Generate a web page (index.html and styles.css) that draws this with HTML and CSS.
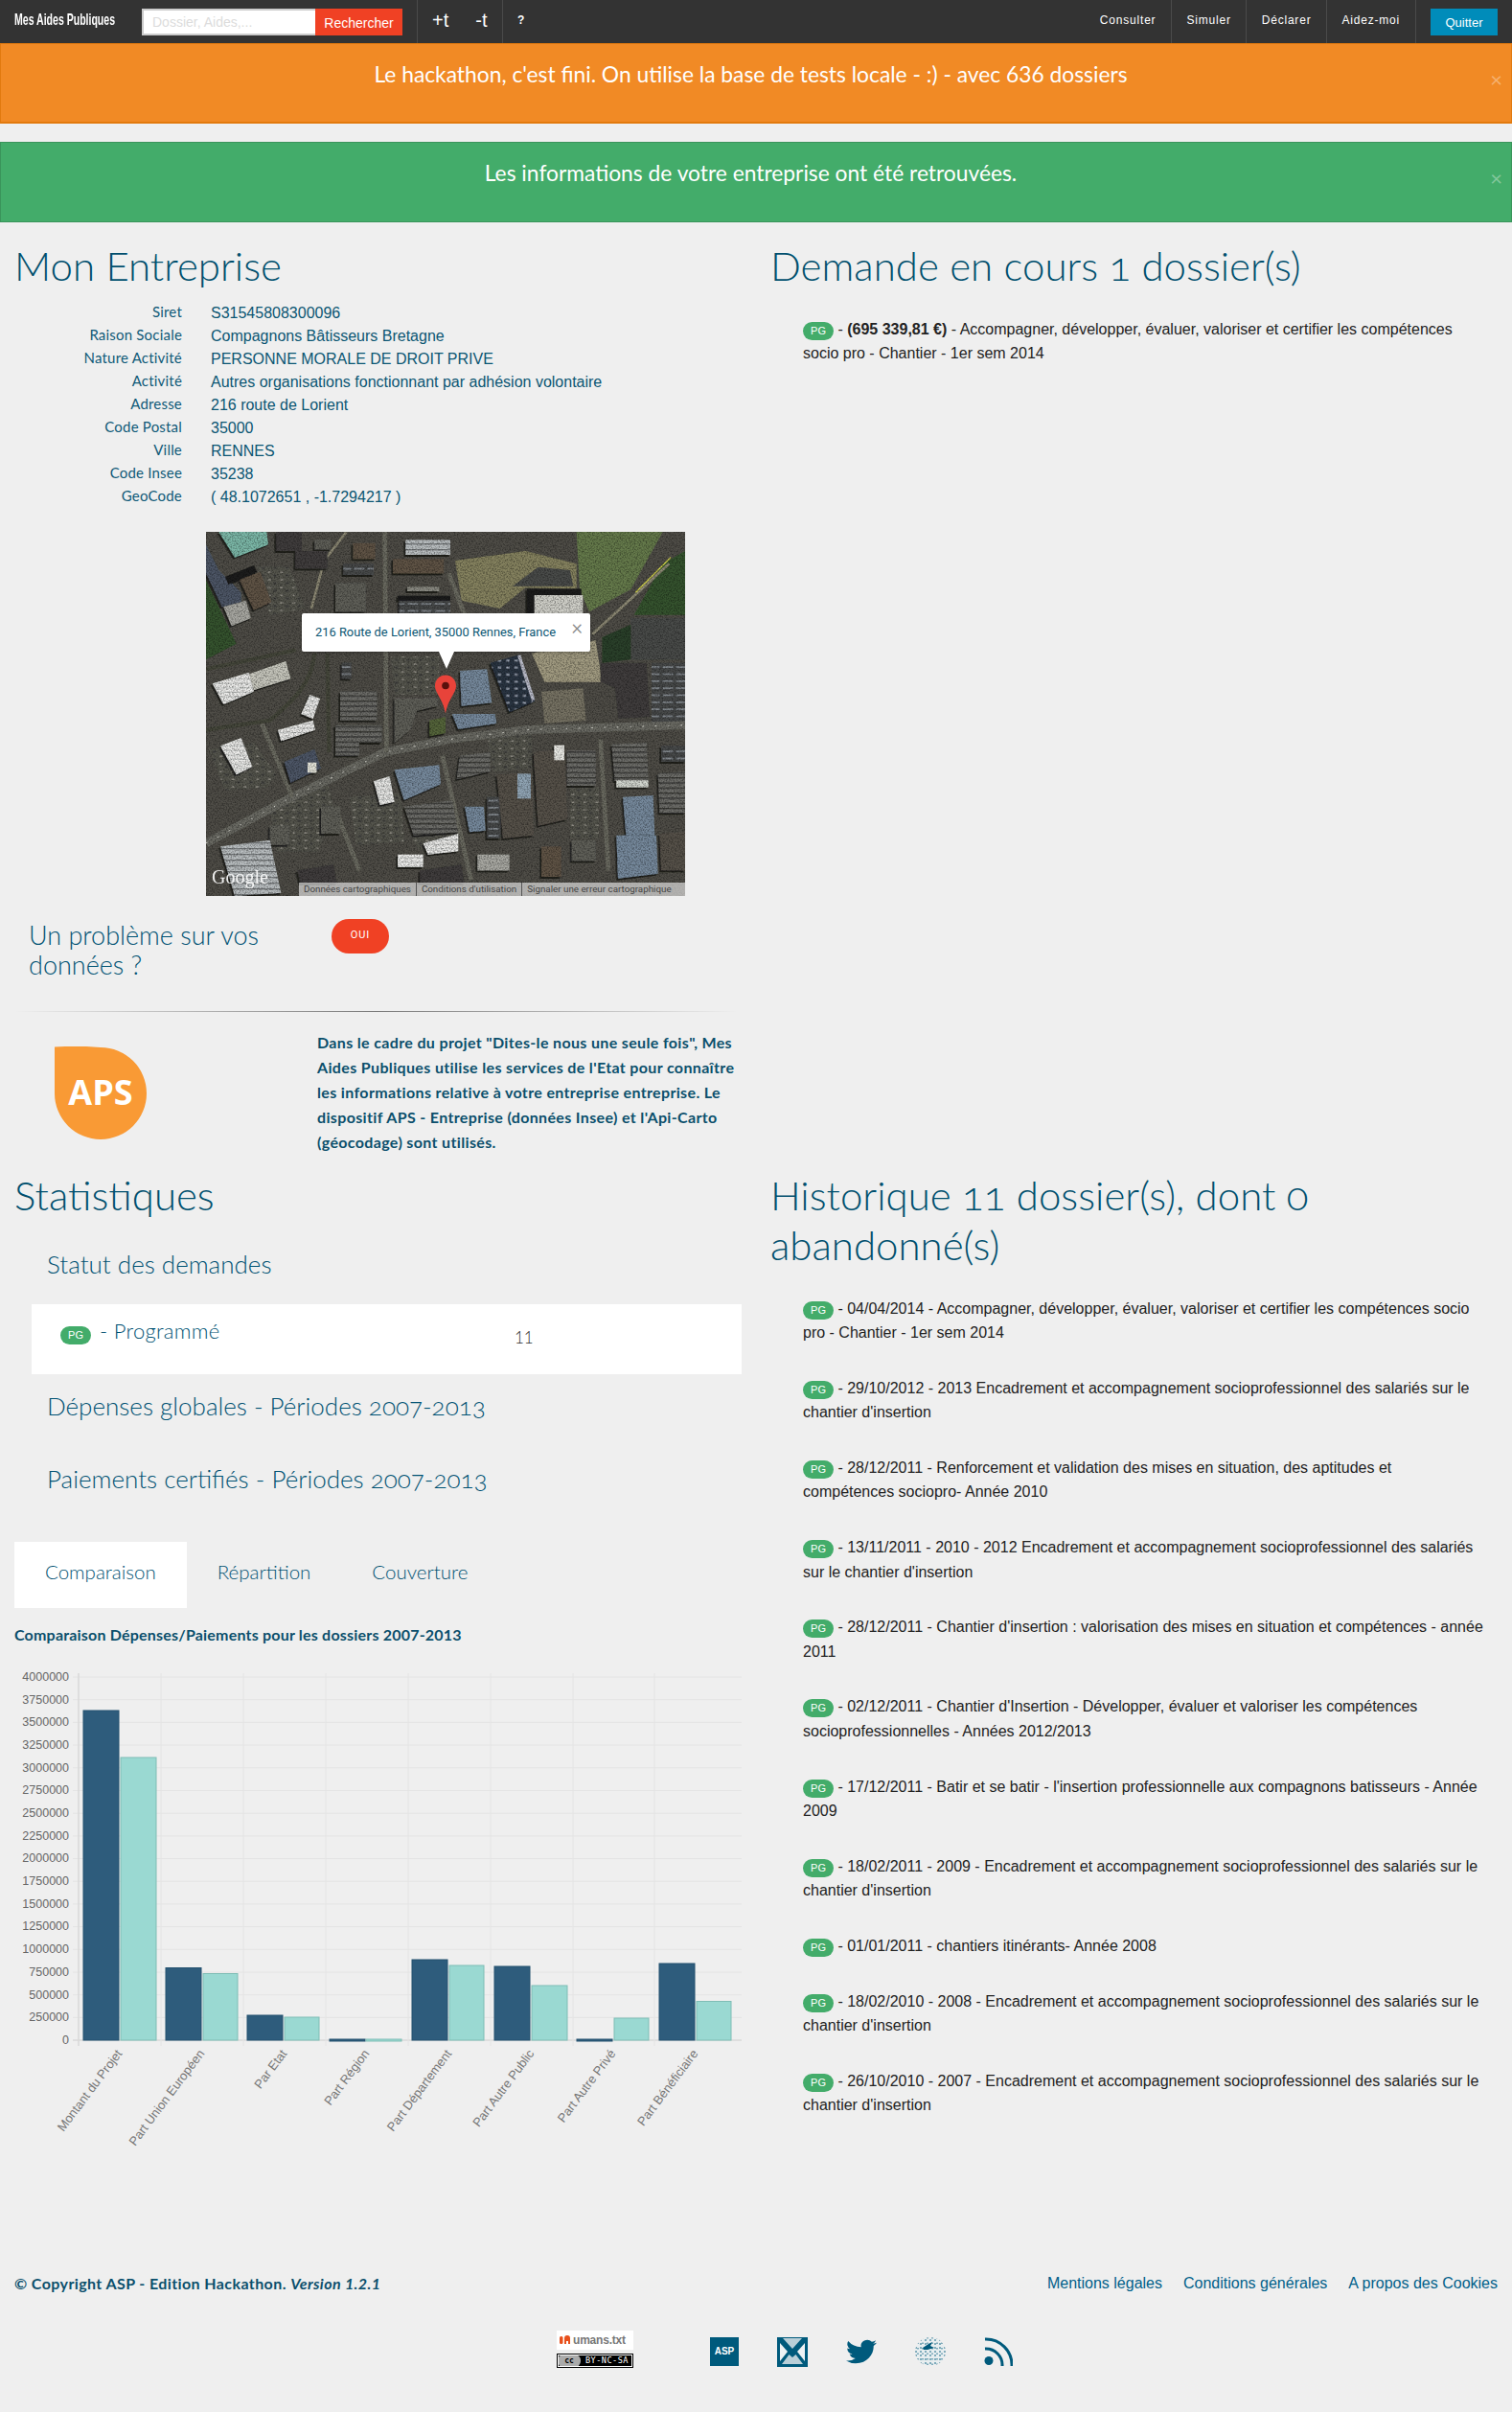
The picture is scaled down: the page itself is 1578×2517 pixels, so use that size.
FILE: index.html
```html
<!DOCTYPE html>
<html lang="fr">
<head>
<meta charset="utf-8">
<title>Mes Aides Publiques</title>
<link rel="stylesheet" href="styles.css">
</head>
<body>
<nav class="topbar">
  <a class="brand"><span class="brand-text">Mes Aides Publiques</span></a>
  <form class="search">
    <input class="search-input" type="text" placeholder="Dossier, Aides,...">
    <span class="search-btn">Rechercher</span>
  </form>
  <div class="tools">
    <a class="tool">+t</a>
    <a class="tool tool-minus">-t</a>
  </div>
  <a class="help">?</a>
  <ul class="menu">
    <li>Consulter</li>
    <li>Simuler</li>
    <li>Déclarer</li>
    <li>Aidez-moi</li>
  </ul>
  <a class="quit">Quitter</a>
</nav>

<div class="alert alert-orange">Le hackathon, c'est fini. On utilise la base de tests locale - :) - avec 636 dossiers<span class="close">×</span></div>
<div class="alert alert-green">Les informations de votre entreprise ont été retrouvées.<span class="close">×</span></div>

<main class="grid">
  <section class="col">
    <h1 class="title">Mon Entreprise</h1>
    <dl class="facts">
      <dt>Siret</dt><dd>S31545808300096</dd>
      <dt>Raison Sociale</dt><dd>Compagnons Bâtisseurs Bretagne</dd>
      <dt>Nature Activité</dt><dd>PERSONNE MORALE DE DROIT PRIVE</dd>
      <dt>Activité</dt><dd>Autres organisations fonctionnant par adhésion volontaire</dd>
      <dt>Adresse</dt><dd>216 route de Lorient</dd>
      <dt>Code Postal</dt><dd>35000</dd>
      <dt>Ville</dt><dd>RENNES</dd>
      <dt>Code Insee</dt><dd>35238</dd>
      <dt>GeoCode</dt><dd>( 48.1072651 , -1.7294217 )</dd>
    </dl>

    <div class="map">
      <svg class="map-img" viewBox="0 0 1500 1140" preserveAspectRatio="none">
        <defs>
          <filter id="grain" x="0" y="0" width="100%" height="100%">
            <feTurbulence type="fractalNoise" baseFrequency="0.22" numOctaves="3" seed="7"/>
            <feColorMatrix values="0 0 0 0 0  0 0 0 0 0  0 0 0 0 0  2.400 0 0 0 -0.950"/>
          </filter>
          <filter id="soft"><feGaussianBlur stdDeviation="1"/></filter>
          <filter id="shadow" x="-5%" y="-5%" width="110%" height="110%"><feDropShadow dx="-5" dy="6" stdDeviation="2" flood-color="#111" flood-opacity=".75"/></filter>
          <pattern id="stripes" width="30" height="16" patternUnits="userSpaceOnUse"><rect width="30" height="16" fill="#6c6c68"/><rect width="30" height="4" fill="#3a3a38"/></pattern>
          <pattern id="light" width="30" height="18" patternUnits="userSpaceOnUse"><rect width="30" height="18" fill="#b9bec0"/><rect width="30" height="4" fill="#767a7c"/></pattern>
          <pattern id="solar" width="26" height="22" patternUnits="userSpaceOnUse"><rect width="26" height="22" fill="#2b3442"/><rect x="4" y="4" width="10" height="6" fill="#a6b0be"/></pattern>
          <pattern id="lot" width="42" height="22" patternUnits="userSpaceOnUse"><rect width="42" height="22" fill="#46494a"/><rect x="2" y="3" width="32" height="5" fill="#858c91"/></pattern>
          <pattern id="white" width="22" height="14" patternUnits="userSpaceOnUse"><rect width="22" height="14" fill="#ececea"/><rect y="11" width="22" height="2" fill="#b8bcba"/></pattern>
          <pattern id="yard" width="38" height="24" patternUnits="userSpaceOnUse"><rect width="38" height="24" fill="#54544e"/><rect x="4" y="4" width="9" height="5" fill="#8c8a80"/><rect x="22" y="14" width="8" height="5" fill="#3a3a38"/></pattern>
        </defs>
        <g filter="url(#soft)">
          <rect class="m-ground" width="1500" height="1140"/>
          <polygon class="m-green" points="0,150 95,350 0,400"/>
          <polygon class="m-field" points="1160,0 1430,0 1330,180 1200,250 1170,180"/>
          <polygon class="m-green" points="1430,100 1500,60 1500,260 1340,260"/>
          <polygon class="m-rubble" points="780,90 1000,60 1160,100 1160,180 1000,175 920,240 800,215"/>
          <polygon class="m-lot-dark" points="960,170 1040,110 1140,120 1150,170"/>
          <polygon class="m-sand" points="1020,380 1220,340 1240,470 1060,470"/>
          <polygon class="m-sand2" points="1050,500 1180,490 1190,590 1060,600"/>
          <rect x="1330" y="270" width="170" height="130" class="m-lot-dark"/>
          <polygon class="m-dark" points="1235,410 1380,410 1390,580 1290,585 1280,490 1235,470"/>
          <rect x="1395" y="410" width="105" height="190" fill="url(#lot)"/>
          <polygon class="m-green2" points="1240,330 1330,290 1330,400 1240,410"/>
          <polygon fill="url(#yard)" points="160,110 260,110 310,240 200,260"/>
          <polygon fill="url(#yard)" points="150,660 220,760 190,800 60,810 10,680"/>
          <polygon fill="url(#yard)" points="450,830 610,820 620,970 470,980"/>
          <polygon fill="url(#yard)" points="580,390 730,390 730,510 590,510"/>
          <polygon fill="url(#yard)" points="640,950 790,930 800,960 670,1000"/>
          <polygon fill="url(#yard)" points="1140,800 1230,800 1230,960 1140,960"/>
          <polygon fill="url(#yard)" points="200,860 380,780 400,870 350,1000 220,1000"/>
          <polygon fill="url(#yard)" points="880,640 1020,630 1020,740 900,750"/>

          <path class="m-road" d="M0 975 L270 830 L560 690 L760 650 L1000 620 L1500 605"/>
          <path class="m-lane" d="M0 975 L270 830 L560 690 L760 650 L1000 620 L1500 605"/>
          <path class="m-road-s" d="M560 0 L565 690"/>
          <path class="m-road-s" d="M740 700 L830 1090"/>
          <path class="m-road-s" d="M1235 650 L1260 1060"/>
          <path class="m-road-s" d="M760 130 L810 260"/>
          <path class="m-road-s" d="M410 880 L480 1060"/>
          <path class="m-road-s" d="M175 600 L270 830"/>
          <path class="m-rail" d="M380 380 L385 690"/>
          <path class="m-rail" d="M0 430 L280 370 M340 380 C330 480 270 530 200 590 L0 620"/>
          <path class="m-track" d="M1210 320 L1450 100"/>
          <path class="m-yellow" d="M1345 190 L1455 80"/>
          <path class="m-track" d="M440 0 L370 90 L330 240"/>

          <g filter="url(#shadow)">
          <polygon class="m-teal" points="40,0 190,0 195,40 90,80"/>
          <rect x="220" y="0" width="80" height="60" class="m-dark"/>
          <rect x="280" y="60" width="100" height="55" class="m-dark"/>
          <rect x="340" y="25" width="50" height="30" class="m-grey"/>
          <polygon class="m-blue-dark" points="0,40 40,120 110,190 110,220 50,235 0,130"/>
          <polygon class="m-black" points="60,140 150,105 160,125 70,165"/>
          <polygon class="m-brown" points="105,150 170,125 205,220 150,245"/>
          <polygon class="m-grey-l" points="55,235 125,215 140,270 80,295"/>
          <rect x="430" y="100" width="95" height="35" fill="url(#lot)"/>
          <rect x="405" y="160" width="95" height="90" class="m-grey"/>
          <rect x="460" y="35" width="70" height="50" class="m-brown"/>
          <rect x="625" y="25" width="140" height="47" fill="url(#light)"/>
          <rect x="585" y="85" width="160" height="45" class="m-brown"/>
          <rect x="605" y="215" width="160" height="40" fill="url(#lot)"/>
          <rect x="600" y="200" width="165" height="15" class="m-black"/>
          <rect x="630" y="172" width="100" height="14" fill="#8a8a82"/>
          <rect x="1005" y="178" width="170" height="80" class="m-black"/>
          <rect x="1028" y="198" width="152" height="57" fill="#cfcfc8"/>
          <polygon fill="url(#solar)" points="890,410 980,385 1030,530 950,565"/>
          <polygon fill="#b7b9c6" points="975,388 985,385 1030,525 1020,530"/>
          <polygon class="m-blue" points="795,435 880,430 895,535 800,545"/>
          <polygon class="m-blue" points="770,570 905,570 910,600 790,618"/>
          <polygon fill="url(#white)" points="20,475 135,440 150,500 55,540"/>
          <polygon class="m-grey-w" points="135,445 250,405 265,460 150,495"/>
          <polygon fill="url(#white)" points="325,510 357,522 335,585 298,570"/>
          <polygon fill="url(#white)" points="225,620 335,590 342,620 235,655"/>
          <polygon fill="url(#white)" points="45,670 110,645 145,735 95,760"/>
          <polygon class="m-blue-dark" points="245,720 340,680 360,740 265,785"/>
          <rect x="318" y="722" width="28" height="32" fill="#e2e2d8"/>
          <rect x="420" y="500" width="115" height="90" fill="url(#stripes)"/>
          <polygon fill="url(#stripes)" points="405,605 550,605 550,660 480,660 480,700 405,700"/>
          <rect x="425" y="410" width="30" height="50" fill="url(#lot)"/>
          <polygon class="m-grey" points="590,520 725,520 725,545 660,560 640,620 590,660"/>
          <polygon class="m-tree" points="700,590 750,580 750,630 700,640"/>
          <polygon class="m-blue" points="590,745 730,730 735,790 620,840"/>
          <polygon fill="url(#white)" points="525,780 575,765 590,845 545,855"/>
          <polygon fill="url(#stripes)" points="620,860 770,840 790,940 650,950"/>
          <polygon fill="url(#stripes)" points="795,700 890,690 890,750 785,775"/>
          <polygon class="m-blue" points="810,860 870,860 875,935 825,940"/>
          <rect x="880" y="830" width="42" height="130" fill="url(#lot)"/>
          <polygon class="m-brown2" points="910,760 1020,755 1025,950 930,960"/>
          <rect x="975" y="757" width="42" height="78" fill="#90a4b4"/>
          <polygon class="m-brown2" points="1025,690 1125,680 1130,900 1040,920"/>
          <rect x="1090" y="668" width="32" height="47" fill="#e9e9e4"/>
          <rect x="1130" y="685" width="90" height="110" fill="url(#stripes)"/>
          <polygon fill="url(#stripes)" points="1270,665 1380,660 1385,780 1280,780"/>
          <rect x="1285" y="778" width="100" height="22" fill="#d2d6cf"/>
          <polygon fill="url(#stripes)" points="1415,755 1500,750 1500,880 1420,880"/>
          <rect x="1425" y="670" width="75" height="50" fill="url(#lot)"/>
          <polygon class="m-blue" points="1305,830 1400,825 1405,950 1315,950"/>
          <polygon class="m-blue" points="1285,950 1410,950 1415,1070 1290,1085"/>
          <polygon class="m-brown2" points="1420,945 1500,940 1500,1060 1425,1060"/>
          <rect x="1145" y="965" width="75" height="65" class="m-grey"/>
          <rect x="1050" y="985" width="62" height="95" class="m-brown"/>
          <polygon fill="url(#white)" points="680,975 790,945 790,1000 695,1010"/>
          <rect x="360" y="860" width="60" height="85" class="m-grey"/>
          <rect x="200" y="920" width="60" height="60" class="m-grey"/>
          <polygon fill="url(#light)" points="45,985 200,965 235,1130 90,1140"/>
          <polygon class="m-dark" points="285,1060 400,1040 410,1100 295,1100"/>
          <polygon class="m-dark" points="670,1060 800,1040 810,1100 670,1100"/>
          <rect x="600" y="1010" width="80" height="40" fill="url(#white)"/>
          <rect x="850" y="1010" width="100" height="50" class="m-grey-l"/>
          </g>
        </g>
        <rect width="1500" height="1140" filter="url(#grain)" class="m-noise"/>
      </svg>
      <div class="bubble">216 Route de Lorient, 35000 Rennes, France<span class="bubble-x">×</span></div>
      <div class="bubble-tail"></div>
      <svg class="pin" viewBox="0 0 22 40"><path d="M11 0 C4.900 0 0 4.800 0 11 C0 19 8 24 11 40 C14 24 22 19 22 11 C22 4.800 17 0 11 0Z" fill="#e8433a"/><circle cx="11" cy="11" r="3.800" fill="#5a100c"/></svg>
      <span class="google">Google</span>
      <div class="attrib"><span>Données cartographiques</span><span>Conditions d'utilisation</span><span>Signaler une erreur cartographique</span></div>
    </div>

    <div class="problem">
      <h3 class="problem-title">Un problème sur vos données ?</h3>
      <a class="oui">OUI</a>
    </div>
    <hr class="fade">
    <div class="aps">
      <svg class="aps-logo" viewBox="0 0 96 97"><path d="M0 0.500 C18 -0.500 32 -0.500 48 1 A48 48 0 1 1 0 49Z" fill="#f99a35"/><text x="48" y="61" text-anchor="middle" class="aps-text">APS</text></svg>
      <p class="aps-p">Dans le cadre du projet "Dites-le nous une seule fois", Mes Aides Publiques utilise les services de l'Etat pour connaître les informations relative à votre entreprise entreprise. Le dispositif APS - Entreprise (données Insee) et l'Api-Carto (géocodage) sont utilisés.</p>
    </div>
  </section>

  <section class="col">
    <h1 class="title">Demande en cours 1 dossier(s)</h1>
    <ul class="files first">
      <li><span class="badge">PG</span> - <b>(695 339,81 €)</b> - Accompagner, développer, évaluer, valoriser et certifier les compétences socio pro - Chantier - 1er sem 2014</li>
    </ul>
  </section>

  <section class="col">
    <h1 class="title">Statistiques</h1>
    <h3 class="acc acc-first">Statut des demandes</h3>
    <div class="panel">
      <span class="badge">PG</span><span class="panel-label">- Programmé</span><span class="panel-num">11</span>
    </div>
    <h3 class="acc acc-2">Dépenses globales - Périodes 2007-2013</h3>
    <h3 class="acc acc-3">Paiements certifiés - Périodes 2007-2013</h3>
    <div class="tabs">
      <span class="tab active">Comparaison</span>
      <span class="tab">Répartition</span>
      <span class="tab">Couverture</span>
    </div>
    <h5 class="chart-title">Comparaison Dépenses/Paiements pour les dossiers 2007-2013</h5>
    <svg class="chart" viewBox="0 1730 789 520">
      <g class="grid-h">
        <line x1="76" x2="774" y1="1750" y2="1750"/><line x1="76" x2="774" y1="1773.700" y2="1773.700"/><line x1="76" x2="774" y1="1797.400" y2="1797.400"/><line x1="76" x2="774" y1="1821.100" y2="1821.100"/><line x1="76" x2="774" y1="1844.800" y2="1844.800"/><line x1="76" x2="774" y1="1868.500" y2="1868.500"/><line x1="76" x2="774" y1="1892.200" y2="1892.200"/><line x1="76" x2="774" y1="1915.900" y2="1915.900"/><line x1="76" x2="774" y1="1939.500" y2="1939.500"/><line x1="76" x2="774" y1="1963.200" y2="1963.200"/><line x1="76" x2="774" y1="1986.900" y2="1986.900"/><line x1="76" x2="774" y1="2010.600" y2="2010.600"/><line x1="76" x2="774" y1="2034.300" y2="2034.300"/><line x1="76" x2="774" y1="2058" y2="2058"/><line x1="76" x2="774" y1="2081.700" y2="2081.700"/><line x1="76" x2="774" y1="2105.400" y2="2105.400"/><line class="axis" x1="76" x2="774" y1="2129" y2="2129"/>
      </g>
      <g class="grid-v">
        <line class="axis" x1="82" x2="82" y1="1746" y2="2135"/><line x1="168" x2="168" y1="1746" y2="2135"/><line x1="254" x2="254" y1="1746" y2="2135"/><line x1="340" x2="340" y1="1746" y2="2135"/><line x1="426" x2="426" y1="1746" y2="2135"/><line x1="512" x2="512" y1="1746" y2="2135"/><line x1="598" x2="598" y1="1746" y2="2135"/><line x1="683" x2="683" y1="1746" y2="2135"/>
      </g>
      <g class="ylab">
        <text x="72" y="1754">4000000</text><text x="72" y="1778">3750000</text><text x="72" y="1801">3500000</text><text x="72" y="1825">3250000</text><text x="72" y="1849">3000000</text><text x="72" y="1872">2750000</text><text x="72" y="1896">2500000</text><text x="72" y="1920">2250000</text><text x="72" y="1943">2000000</text><text x="72" y="1967">1750000</text><text x="72" y="1991">1500000</text><text x="72" y="2014">1250000</text><text x="72" y="2038">1000000</text><text x="72" y="2062">750000</text><text x="72" y="2086">500000</text><text x="72" y="2109">250000</text><text x="72" y="2133">0</text>
      </g>
      <g class="bar-a">
        <rect x="87" y="1785" width="37" height="344"/><rect x="173" y="2053.500" width="37" height="75.500"/><rect x="258" y="2103" width="37" height="26"/><rect x="344" y="2128" width="37" height="2"/><rect x="430" y="2045" width="37" height="84"/><rect x="516" y="2052" width="37" height="77"/><rect x="602" y="2128" width="37" height="2"/><rect x="688" y="2049" width="37" height="80"/>
      </g>
      <g class="bar-b">
        <rect x="126" y="1834" width="37" height="295"/><rect x="212" y="2059.500" width="36" height="69.500"/><rect x="297" y="2105" width="36" height="24"/><rect x="382" y="2128" width="37" height="2"/><rect x="469" y="2051" width="36" height="78"/><rect x="555" y="2072" width="37" height="57"/><rect x="641" y="2106" width="36" height="23"/><rect x="727" y="2088.500" width="36" height="40.500"/>
      </g>
      <g class="xlab">
        <text transform="translate(128 2143) rotate(-53)">Montant du Projet</text>
        <text transform="translate(214 2143) rotate(-53)">Part Union Européen</text>
        <text transform="translate(300 2143) rotate(-53)">Par Etat</text>
        <text transform="translate(386 2143) rotate(-53)">Part Région</text>
        <text transform="translate(472 2143) rotate(-53)">Part Département</text>
        <text transform="translate(558 2143) rotate(-53)">Part Autre Public</text>
        <text transform="translate(643 2143) rotate(-53)">Part Autre Privé</text>
        <text transform="translate(729 2143) rotate(-53)">Part Bénéficiaire</text>
      </g>
    </svg>
  </section>

  <section class="col">
    <h1 class="title">Historique 11 dossier(s), dont 0 abandonné(s)</h1>
    <ul class="files">
      <li><span class="badge">PG</span> - 04/04/2014 - Accompagner, développer, évaluer, valoriser et certifier les compétences socio pro - Chantier - 1er sem 2014</li>
      <li><span class="badge">PG</span> - 29/10/2012 - 2013 Encadrement et accompagnement socioprofessionnel des salariés sur le chantier d'insertion</li>
      <li><span class="badge">PG</span> - 28/12/2011 - Renforcement et validation des mises en situation, des aptitudes et compétences sociopro- Année 2010</li>
      <li><span class="badge">PG</span> - 13/11/2011 - 2010 - 2012 Encadrement et accompagnement socioprofessionnel des salariés sur le chantier d'insertion</li>
      <li><span class="badge">PG</span> - 28/12/2011 - Chantier d'insertion : valorisation des mises en situation et compétences - année 2011</li>
      <li><span class="badge">PG</span> - 02/12/2011 - Chantier d'Insertion - Développer, évaluer et valoriser les compétences socioprofessionnelles - Années 2012/2013</li>
      <li><span class="badge">PG</span> - 17/12/2011 - Batir et se batir - l'insertion professionnelle aux compagnons batisseurs - Année 2009</li>
      <li><span class="badge">PG</span> - 18/02/2011 - 2009 - Encadrement et accompagnement socioprofessionnel des salariés sur le chantier d'insertion</li>
      <li><span class="badge">PG</span> - 01/01/2011 - chantiers itinérants- Année 2008</li>
      <li><span class="badge">PG</span> - 18/02/2010 - 2008 - Encadrement et accompagnement socioprofessionnel des salariés sur le chantier d'insertion</li>
      <li><span class="badge">PG</span> - 26/10/2010 - 2007 - Encadrement et accompagnement socioprofessionnel des salariés sur le chantier d'insertion</li>
    </ul>
  </section>
</main>

<footer class="footer">
  <div class="foot-top">
    <p class="copy">© Copyright ASP - Edition Hackathon. <em>Version 1.2.1</em></p>
    <div class="foot-links"><a>Mentions légales</a><a>Conditions générales</a><a>A propos des Cookies</a></div>
  </div>
  <div class="foot-icons">
    <div class="badges">
      <div class="humans"><svg class="humans-ico" viewBox="0 0 14 10"><rect x="0" y="1" width="3.500" height="8" rx="1.500" fill="#e8501c"/><path d="M5 9V3a3 3 0 0 1 6 0v6h-2V6H7v3Z" fill="#e8501c"/></svg><span>umans.txt</span></div>
      <div class="cc"><span class="cc-logo">cc</span><span class="cc-text">BY-NC-SA</span></div>
    </div>
    <div class="asp-ico">ASP</div>
    <svg class="ico mail" viewBox="0 0 32 31"><rect width="32" height="31" fill="#005a7c"/><path d="M6 1 H26 L16 12Z" fill="#b9cfd8"/><path d="M3 6 L11 15 L3 25Z" fill="#eef2f4"/><path d="M29 6 L21 15 L29 25Z" fill="#eef2f4"/><path d="M5 28 L12.500 18 L16 21 L19.500 18 L27 28Z" fill="#b9cfd8"/></svg>
    <svg class="ico tw" viewBox="0 0 24 24" preserveAspectRatio="none"><path d="M23.950 4.570a10 10 0 0 1-2.820.770 4.960 4.960 0 0 0 2.160-2.720 9.900 9.900 0 0 1-3.120 1.180 4.920 4.920 0 0 0-8.380 4.480A13.980 13.980 0 0 1 1.670 3.150a4.920 4.920 0 0 0 1.520 6.570 4.900 4.900 0 0 1-2.230-.610v.060a4.920 4.920 0 0 0 3.950 4.830 4.900 4.900 0 0 1-2.210.080 4.940 4.940 0 0 0 4.600 3.420A9.870 9.870 0 0 1 0 19.540a13.940 13.940 0 0 0 7.550 2.210c9.050 0 14-7.500 14-13.980 0-.210 0-.420-.020-.630a9.940 9.940 0 0 0 2.460-2.550z" fill="#005a7c"/></svg>
    <svg class="ico globe" viewBox="0 0 32 30"><defs><clipPath id="gc"><ellipse cx="16" cy="15" rx="16" ry="15"/></clipPath></defs><ellipse cx="16" cy="15" rx="15.500" ry="14.500" fill="#e8eef0"/><g clip-path="url(#gc)" class="globe-l"><path d="M0 3H32M0 7H32M0 11H32M0 15H32M0 19H32M0 23H32M0 27H32" stroke-dasharray="2 3"/><path d="M3 0V30M8 0V30M13 0V30M18 0V30M23 0V30M28 0V30" stroke-dasharray="1.500 4"/></g><path d="M8 11 L14 7 L18 5 L16 9 L20 11 L13 13 L9 13Z" fill="#005a7c"/></svg>
    <svg class="ico rss" viewBox="0 0 30 30"><circle cx="5" cy="24.500" r="4.500" fill="#005a7c"/><path d="M1 12 A17 17 0 0 1 19 30" class="rss-l"/><path d="M1 2 A27 27 0 0 1 29 30" class="rss-l"/></svg>
  </div>
</footer>
</body>
</html>
```

FILE: styles.css
```css
* { box-sizing: border-box; }
html, body { margin: 0; padding: 0; }
body { background: #efefef; font-family: "Liberation Sans", Arial, sans-serif; font-size: 14px; color: #222; min-height: 2517px; }
h1, h3, h5, p, ul, dl, dd { margin: 0; padding: 0; }
ul { list-style: none; }

/* top bar */
.topbar { display: flex; align-items: stretch; height: 45px; background: #333; color: #fff; }
.brand { width: 148px; padding-left: 15px; font-size: 17px; font-weight: 700; line-height: 41px; white-space: nowrap; }
.brand-text { display: inline-block; transform: scaleX(.62); transform-origin: 0 50%; }
.search { display: flex; margin-top: 9px; height: 28px; }
.search-input { width: 181px; height: 28px; border: 2px solid #ccc; border-right: 0; background: #fff; padding: 0 9px; font: 14px "Liberation Sans", sans-serif; }
.search-input::placeholder { color: #dcdcdc; opacity: 1; }
.search-btn { width: 91px; background: #f04124; text-align: center; font-size: 14px; line-height: 30px; }
.tools { display: flex; margin-left: 15px; width: 90px; border-left: 1px solid #4a4a4a; border-right: 1px solid #4a4a4a; font-size: 20px; }
.tool { margin-left: 15px; line-height: 42px; font-weight: 400; }
.tool-minus { margin-left: 28px; }
.help { margin-left: 15px; line-height: 43px; font-size: 12px; font-weight: 700; }
.menu { display: flex; margin-left: auto; font-size: 12px; letter-spacing: .8px; }
.menu li { padding: 0 15.500px; line-height: 43px; border-right: 1px solid #4a4a4a; white-space: nowrap; }
.quit { align-self: flex-start; margin: 9px 15px 0 15.500px; width: 70px; height: 28px; background: #008cba; text-align: center; font-size: 13px; line-height: 30px; }

/* alerts */
.alert { position: relative; height: 84px; margin-bottom: 19px; padding: 17px 11px 0 0; border: 1px solid; text-align: center; color: #fff; font-family: Lato, sans-serif; font-size: 22.800px; line-height: 28px; }
.alert-orange { background: #f18a25; border-color: #e27a0e; border-bottom-width: 2px; margin-bottom: 19px; }
.alert-green { background: #43ac6a; border-color: #3a945b; }
.close { position: absolute; right: 9px; top: 23px; font-size: 22px; color: rgba(255,255,255,.35); }

/* columns */
.grid { display: grid; grid-template-columns: 789px 789px; }
.col { padding: 0 15px; min-width: 0; }
.title { font-family: Lato, sans-serif; font-weight: 300; font-size: 42px; line-height: 52px; color: #004f6e; font-feature-settings: "onum"; }

/* facts */
.facts { display: grid; grid-template-columns: 175px 1fr; column-gap: 30px; margin-top: 11px; color: #0b5673; }
.facts dt, .facts dd { height: 24px; line-height: 24px; }
.facts dt { text-align: right; font-family: Lato, sans-serif; font-size: 15px; letter-spacing: .2px; line-height: 23px; color: #0f5a78; }
.facts dd { font-size: 16px; line-height: 25px; }

/* map */
.map { position: relative; width: 500px; height: 380px; margin: 25px 0 0 200px; overflow: hidden; }
.map-img { display: block; width: 500px; height: 380px; }
.m-ground { fill: #4f4e46; }
.m-green { fill: #35532e; }
.m-green2 { fill: #2c3f2a; }
.m-field { fill: #657a4b; }
.m-rubble { fill: #85825f; }
.m-sand { fill: #a09a80; }
.m-sand2 { fill: #767264; }
.m-lot-dark { fill: #4a4b4a; }
.m-dark { fill: #3f3e3c; }
.m-black { fill: #1f1f1e; }
.m-teal { fill: #7cb8a8; }
.m-grey { fill: #5f5e59; }
.m-grey-l { fill: #a8a8a2; }
.m-grey-w { fill: #c6c6bc; }
.m-brown { fill: #5f5244; }
.m-brown2 { fill: #57514a; }
.m-blue { fill: #76899c; }
.m-blue-dark { fill: #4d5666; }
.m-tree { fill: #55653a; }
.m-road { fill: none; stroke: #6a6a64; stroke-width: 26; }
.m-lane { fill: none; stroke: #d5d5cc; stroke-width: 3; stroke-dasharray: 6 34; }
.m-road-s { fill: none; stroke: #6b6a61; stroke-width: 14; }
.m-rail { fill: none; stroke: #45463a; stroke-width: 12; }
.m-track { fill: none; stroke: #8d8974; stroke-width: 8; }
.m-yellow { fill: none; stroke: #d6d64e; stroke-width: 4; }
.m-noise { opacity: .4; }
.bubble { position: absolute; left: 100px; top: 85px; width: 301px; height: 40px; background: #fff; border-radius: 2px; padding-left: 14px; font-family: Roboto, sans-serif; font-size: 12.900px; line-height: 40px; color: #0b5673; white-space: nowrap; box-shadow: 0 1px 3px rgba(0,0,0,.3); }
.bubble-x { position: absolute; right: 8px; top: -5px; font-size: 22px; font-weight: 300; color: #8a8a8a; }
.bubble-tail { position: absolute; left: 243px; top: 125px; border-left: 8px solid transparent; border-right: 8px solid transparent; border-top: 18px solid #fff; }
.pin { position: absolute; left: 239px; top: 149px; width: 22px; height: 41px; }
.google { position: absolute; left: 6px; top: 349px; font-family: "Liberation Serif", serif; font-size: 20px; color: #fff; opacity: .9; }
.attrib { position: absolute; right: 0; bottom: 0; display: flex; height: 14px; width: 403px; background: rgba(240,240,240,.62); font-family: Roboto, sans-serif; font-size: 9.800px; line-height: 14px; color: #444; padding-left: 5px; white-space: nowrap; }
.attrib span { padding-right: 5px; margin-right: 5px; border-right: 1px solid #555; }
.attrib span:last-child { border: 0; padding: 0; margin: 0; }

/* problem */
.problem { display: flex; align-items: flex-start; margin-top: 24px; padding-left: 15px; }
.problem-title { flex: none; width: 270px; margin-right: 46px; padding-top: 1px; font-family: Lato, sans-serif; font-weight: 300; font-size: 27px; line-height: 31px; color: #005273; }
.oui { width: 60px; height: 36px; background: #f04124; border-radius: 18px; color: #fff; text-align: center; font-family: Roboto, sans-serif; font-size: 11px; line-height: 34px; letter-spacing: 1px; }
.fade { height: 1px; border: 0; margin: 33px 4px 0 0; background: linear-gradient(90deg, rgba(90,90,90,0), #777 50%, rgba(90,90,90,0)); }
.aps { display: flex; margin: 19px 0 16px; }
.aps-logo { width: 96px; height: 97px; margin: 17px 0 0 42px; flex: none; }
.aps-text { font-family: "Open Sans", sans-serif; font-weight: 700; font-size: 36px; fill: #fff; }
.aps-p { width: 447px; margin-left: 178px; font-family: Lato, sans-serif; font-weight: 700; font-size: 16px; letter-spacing: .35px; line-height: 25.900px; color: #0b4f6c; }

/* lists */
.files { margin: 28px 13px 0 34px; }
.files li { line-height: 25.500px; margin-bottom: 32.200px; font-size: 16px; color: #222; }
.files.first li { line-height: 25px; }
.badge { display: inline-block; width: 32px; height: 19px; border-radius: 10px; background: #43ac6a; color: #fff; text-align: center; font-size: 11px; line-height: 19px; vertical-align: 0; }

/* stats */
.acc { font-family: Lato, sans-serif; font-weight: 300; font-size: 26px; line-height: 40px; color: #005273; padding-left: 34px; font-feature-settings: "onum"; white-space: nowrap; }
.acc-first { margin-top: 26px; }
.acc-2 { margin-top: 13px; }
.acc-3 { margin-top: 36px; }
.panel { position: relative; margin: 22px 0 0 18px; width: 741px; height: 73px; background: #fff; padding: 18px 0 0 30px; }
.panel-label { margin-left: 9px; font-family: Lato, sans-serif; font-weight: 300; font-size: 22px; line-height: 19px; color: #005273; letter-spacing: .3px; }
.panel-num { position: absolute; left: 504px; top: 24px; font-family: Lato, sans-serif; font-weight: 300; font-size: 17px; color: #333; }
.tabs { display: flex; margin-top: 46px; height: 69px; }
.tab { padding: 0 32px; line-height: 62px; font-family: Lato, sans-serif; font-weight: 300; font-size: 20.500px; color: #005273; }
.tab.active { background: #fff; }
.chart-title { margin-top: 18px; font-family: Lato, sans-serif; font-weight: 700; font-size: 16px; letter-spacing: .2px; line-height: 20px; color: #0b4f6c; }
.chart { display: block; width: 789px; height: 520px; margin: 14px 0 0 -15px; }
.grid-h line, .grid-v line { stroke: #e4e4e4; stroke-width: 1; }
.grid-h .axis, .grid-v .axis { stroke: #d8d8d8; stroke-width: 1.500; }
.ylab text { font-family: "Liberation Sans", sans-serif; font-size: 12.500px; fill: #666; text-anchor: end; }
.xlab text { font-family: "Liberation Sans", sans-serif; font-size: 13px; fill: #777; text-anchor: end; }
.bar-a rect { fill: #2e5c7c; stroke: #23506e; stroke-width: 1; }
.bar-b rect { fill: #9ad9d2; stroke: #7fbdb5; stroke-width: 1; }

/* footer */
.foot-top { display: flex; justify-content: space-between; padding: 0 15px; margin-top: 123px; height: 20px; line-height: 20px; }
.copy { font-family: Lato, sans-serif; font-weight: 700; font-size: 16px; letter-spacing: .4px; color: #0b4f6c; }
.foot-links { display: flex; gap: 22px; font-size: 16px; color: #00608a; }
.foot-icons { display: flex; align-items: flex-start; margin: 39px 0 0 581px; }
.badges { width: 80px; }
.humans { display: flex; align-items: center; height: 20px; background: #fff; padding-left: 3px; font-size: 12px; font-weight: 700; color: #777; letter-spacing: -.2px; }
.humans-ico { width: 14px; height: 10px; }
.cc { display: flex; align-items: center; height: 15px; margin-top: 4px; background: #000; border: 1px solid #000; outline: 1px solid #fff; outline-offset: -2px; color: #fff; font-family: "DejaVu Sans Mono", monospace; font-size: 8.500px; }
.cc-logo { width: 24px; height: 13px; background: #aaa; color: #000; text-align: center; line-height: 13px; font-weight: 700; font-size: 8px; border-radius: 6px; }
.cc-text { margin-left: 5px; letter-spacing: .5px; }
.asp-ico { width: 30px; height: 30px; margin: 7px 0 0 80px; background: #005a7c; color: #fff; text-align: center; font-size: 10px; font-weight: 700; line-height: 30px; }
.ico { display: block; margin-top: 7px; }
.mail { width: 32px; height: 31px; margin-left: 40px; }
.tw { width: 32px; height: 30px; margin-left: 40px; }
.globe { width: 32px; height: 30px; margin-left: 40px; }
.globe-l { fill: none; stroke: #005a7c; stroke-width: .9; }
.rss { width: 30px; height: 30px; margin-left: 40px; }
.rss-l { fill: none; stroke: #005a7c; stroke-width: 3; }
```
